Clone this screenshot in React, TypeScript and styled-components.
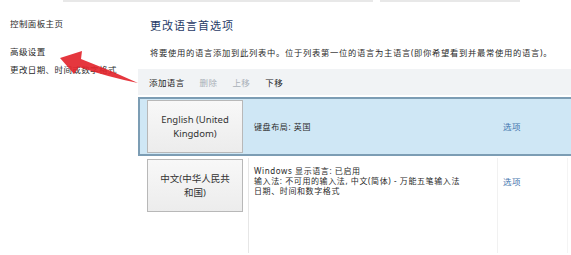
import React from "react";
import styled, { createGlobalStyle } from "styled-components";

const GlobalStyle = createGlobalStyle`
  html, body {
    margin: 0;
    padding: 0;
    background: #ffffff;
  }
  body {
    width: 571px;
    height: 255px;
    overflow: hidden;
    font-family: "Noto Sans", "Noto Sans CJK SC", sans-serif;
    color: #222;
  }
`;

const Page = styled.div`
  position: relative;
  width: 571px;
  height: 255px;
  display: flex;
  flex-direction: column;
`;

const TopStrip = styled.div`
  display: flex;
  height: 2px;
  padding-left: 63px;
  gap: 7px;
`;

const StripPart = styled.div<{ $w: number }>`
  width: ${(p) => p.$w}px;
  background: #e8e8e8;
`;

const Body = styled.div`
  flex: 1;
  display: flex;
`;

const Sidebar = styled.nav`
  width: 128px;
  padding: 16px 0 0 10px;
  display: flex;
  flex-direction: column;
`;

const SideLink = styled.div<{ $gap: number }>`
  margin-top: ${(p) => p.$gap}px;
  font-size: 8.5px;
  letter-spacing: 0.4px;
  line-height: 12px;
  color: #2a2a2a;
  white-space: nowrap;
`;

const Main = styled.main`
  flex: 1;
  display: flex;
  flex-direction: column;
  min-width: 0;
`;

const Title = styled.h1`
  margin: 17px 0 0 12px;
  font-size: 11px;
  letter-spacing: 1px;
  line-height: 14px;
  font-weight: 400;
  color: #1f3a66;
`;

const Intro = styled.p`
  margin: 14px 0 0 12px;
  font-size: 8.3px;
  letter-spacing: 0.7px;
  line-height: 12px;
  color: #2a2a2a;
  white-space: nowrap;
`;

const Toolbar = styled.div`
  margin-top: 10px;
  height: 26px;
  display: flex;
  align-items: center;
  gap: 15px;
  padding-left: 11px;
  background: #f1f3f5;
`;

const ToolButton = styled.span<{ $disabled?: boolean }>`
  font-size: 8.5px;
  letter-spacing: 0.4px;
  color: ${(p) => (p.$disabled ? "#a9b0b8" : "#1c1c1c")};
`;

const List = styled.div`
  margin-top: 2px;
  display: flex;
  flex-direction: column;
  flex: 1;
`;

const Row = styled.div<{ $selected?: boolean; $fill?: boolean }>`
  display: grid;
  grid-template-columns: 108px 249px 70px 1fr;
  border: 2px solid ${(p) => (p.$selected ? "#7c9db4" : "transparent")};
  border-right: none;
  background: ${(p) => (p.$selected ? "#cfe7f5" : "#ffffff")};
  ${(p) => (p.$fill ? "flex: 1;" : "")}
`;

const ButtonCell = styled.div`
  padding: 1px 0 1px 7px;
`;

const LangButton = styled.div`
  width: 96px;
  height: 53px;
  box-sizing: border-box;
  border: 1px solid #b8b8b8;
  background: linear-gradient(#f8f8f8, #ececec);
  display: flex;
  align-items: center;
  justify-content: center;
  text-align: center;
  font-size: 9.5px;
  line-height: 14px;
  color: #333;
`;

const InfoCell = styled.div<{ $divider?: string; $center?: boolean; $top?: number }>`
  padding: ${(p) => (p.$center ? 0 : p.$top ?? 8)}px 0 0 5px;
  border-left: 1px solid ${(p) => p.$divider || "transparent"};
  display: flex;
  flex-direction: column;
  justify-content: ${(p) => (p.$center ? "center" : "flex-start")};
`;

const InfoLine = styled.div`
  font-size: 8px;
  letter-spacing: 0.6px;
  line-height: 10px;
  color: #2a2a2a;
  white-space: nowrap;
`;

const OptionLink = styled.a`
  font-size: 8.5px;
  letter-spacing: 0.4px;
  color: #3f74ad;
  text-decoration: none;
  line-height: 10px;
`;

const Arrow = styled.svg`
  position: absolute;
  left: 0;
  top: 0;
  pointer-events: none;
`;

export default function App() {
  return (
    <>
      <GlobalStyle />
      <Page>
        <TopStrip>
          <StripPart $w={310} />
          <StripPart $w={140} />
        </TopStrip>
        <Body>
          <Sidebar>
            <SideLink $gap={0}>控制面板主页</SideLink>
            <SideLink $gap={16}>高级设置</SideLink>
            <SideLink $gap={6}>更改日期、时间或数字格式</SideLink>
          </Sidebar>
          <Main>
            <Title>更改语言首选项</Title>
            <Intro>
              将要使用的语言添加到此列表中。位于列表第一位的语言为主语言(即你希望看到并最常使用的语言)。
            </Intro>
            <Toolbar>
              <ToolButton>添加语言</ToolButton>
              <ToolButton $disabled>删除</ToolButton>
              <ToolButton $disabled>上移</ToolButton>
              <ToolButton>下移</ToolButton>
            </Toolbar>
            <List>
              <Row $selected>
                <ButtonCell>
                  <LangButton>
                    English (United
                    <br />
                    Kingdom)
                  </LangButton>
                </ButtonCell>
                <InfoCell $center>
                  <InfoLine>键盘布局: 英国</InfoLine>
                </InfoCell>
                <InfoCell $center>
                  <OptionLink href="#">选项</OptionLink>
                </InfoCell>
                <div />
              </Row>
              <Row $fill>
                <ButtonCell>
                  <LangButton>
                    中文(中华人民共
                    <br />
                    和国)
                  </LangButton>
                </ButtonCell>
                <InfoCell $divider="#e6e6e6" $top={8}>
                  <InfoLine>Windows 显示语言: 已启用</InfoLine>
                  <InfoLine>输入法: 不可用的输入法, 中文(简体) - 万能五笔输入法</InfoLine>
                  <InfoLine>日期、时间和数字格式</InfoLine>
                </InfoCell>
                <InfoCell $divider="#f1f1f1" $top={19}>
                  <OptionLink href="#">选项</OptionLink>
                </InfoCell>
                <InfoCell $divider="#f4f4f4" />
              </Row>
            </List>
          </Main>
        </Body>
        <Arrow width="571" height="255" viewBox="0 0 571 255">
          <path
            d="M60 58 L82 51 L81 59 Q110 70 138 83 Q108 77 79 67 L74 74 Z"
            fill="#e3262e"
            opacity="0.92"
          />
        </Arrow>
      </Page>
    </>
  );
}
